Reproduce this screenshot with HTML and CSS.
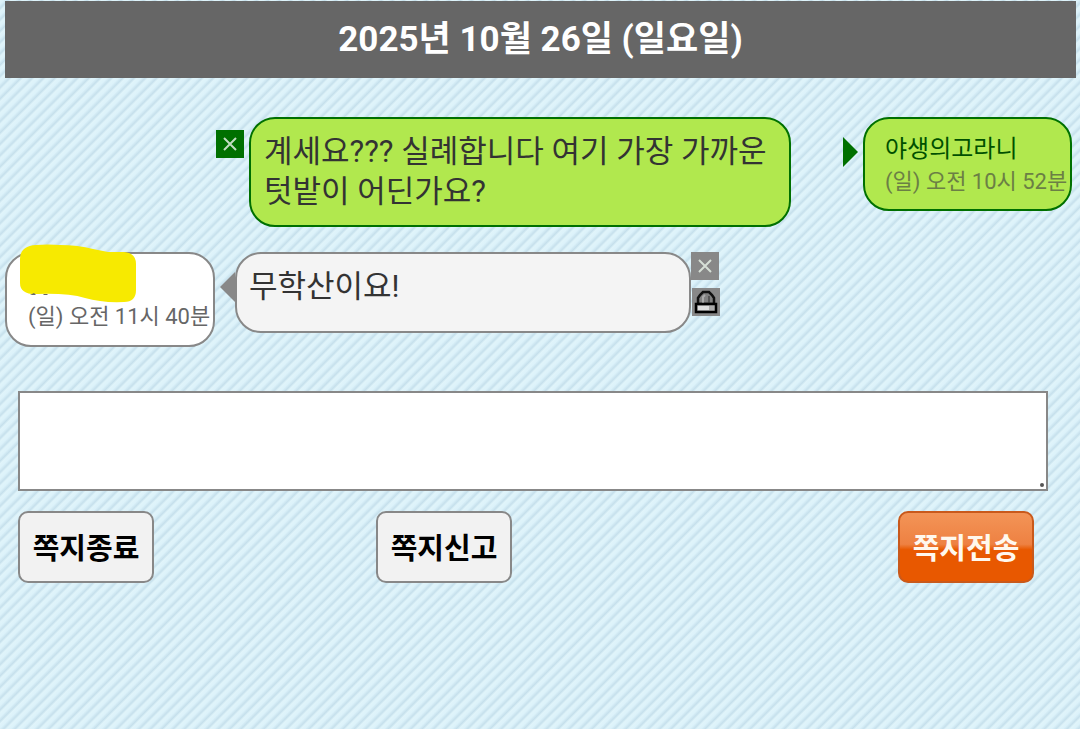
FILE: index.html
```
<!DOCTYPE html>
<html lang="ko">
<head>
<meta charset="utf-8">
<meta name="viewport" content="width=device-width, initial-scale=1">
<title>쪽지</title>
<link rel="stylesheet" href="styles.css">
</head>
<body>
<h1 class="date">2025년 10월 26일 (일요일)</h1>
<main class="thread">
  <article class="row row-sent">
    <button class="tool tool-green" type="button" aria-label="삭제">
      <svg viewBox="0 0 28 28"><path class="cross" d="M8 8l12 12M20 8L8 20"/></svg>
    </button>
    <p class="bubble bubble-sent">계세요??? 실례합니다 여기 가장 가까운 텃밭이 어딘가요?</p>
    <svg class="arrow arrow-sent" viewBox="0 0 15 30"><path d="M0 0L15 15L0 30Z"/></svg>
    <div class="person person-sent">
      <span class="name">야생의고라니</span>
      <time class="time">(일) 오전 10시 52분</time>
    </div>
  </article>
  <article class="row row-received">
    <div class="person person-received">
      <span class="name"></span>
      <time class="time">(일) 오전 11시 40분</time>
      <svg class="marker" viewBox="0 0 116 59"><path d="M16 1Q28 0 40 1Q58 1 73 5L88 8H104Q116 9 116 20V46Q116 58 104 58Q82 59 65 54Q48 49 18 50Q0 51 0 39V15Q0 2 16 1Z"/><path class="remnant" d="M10 51L14 49L16 51ZM23 50H28L27 51H24Z"/></svg>
    </div>
    <svg class="arrow arrow-received" viewBox="0 0 15 30"><path d="M15 0V30L0 15Z"/></svg>
    <p class="bubble bubble-received">무학산이요!</p>
    <div class="tools">
      <button class="tool tool-gray" type="button" aria-label="삭제">
        <svg viewBox="0 0 28 28"><path class="cross" d="M8 8l12 12M20 8L8 20"/></svg>
      </button>
      <button class="tool tool-gray tool-lock" type="button" aria-label="잠금">
        <svg viewBox="0 0 28 28">
          <path d="M6 16V10L8 7L11 4H17L20 7L22 10V16Z" fill="#808080" stroke="#111" stroke-width="2.5"/>
          <path d="M11 15V9L13 7" fill="none" stroke="#aaa" stroke-width="2"/>
          <path d="M17 15V8" fill="none" stroke="#555" stroke-width="2"/>
          <path d="M4 16H24V24H4Z" fill="#aaa" stroke="#000" stroke-width="2.5"/>
          <path d="M6 18H17V22H6Z" fill="#ddd"/>
        </svg>
      </button>
    </div>
  </article>
</main>
<form class="compose">
  <div class="field">
    <textarea class="message" aria-label="쪽지 내용"></textarea>
    <span class="grip"></span>
  </div>
  <div class="actions">
    <button class="btn" type="button">쪽지종료</button>
    <button class="btn" type="button">쪽지신고</button>
    <button class="btn btn-send" type="button">쪽지전송</button>
  </div>
</form>
</body>
</html>
```
FILE: styles.css
```
* { box-sizing: border-box; }
body {
  margin: 0;
  min-height: 100vh;
  padding: 1px 4px 0 5px;
  font-family: Roboto, "Noto Sans CJK KR", sans-serif;
  color: #333;
  background: repeating-linear-gradient(135deg, #e0f4fa 0, #dcf2fa 3px, #c6e0ec 6px, #e0f4fa 8px);
}
.date {
  margin: 0;
  padding: 14px 0;
  font-size: 35px;
  line-height: 49px;
  font-weight: 700;
  text-align: center;
  color: #fff;
  background: #666;
}
.thread { padding-top: 39px; }
.row { display: flex; align-items: flex-start; }
.row-sent { justify-content: flex-end; padding-right: 4px; margin-bottom: 25px; }
.bubble {
  margin: 0;
  padding: 13px;
  border: 2px solid #888;
  border-radius: 26px;
  font-size: 31px;
  line-height: 40px;
}
.bubble-sent {
  width: 542px;
  min-height: 110px;
  margin-left: 5px;
  background: #b1e84e;
  border-color: #007000;
}
.bubble-received { width: 456px; min-height: 81px; padding-left: 12px; background: #f4f4f4; }
.person {
  flex: none;
  position: relative;
  width: 210px;
  padding: 13px 0 12px 21px;
  border: 2px solid #888;
  border-radius: 26px;
  background: #fff;
  white-space: nowrap;
}
.person-sent {
  width: 209px;
  padding: 13px 0 11px 20px;
  margin-left: 5px;
  background: #b1e84e;
  border-color: #007000;
}
.name { display: block; min-height: 34px; font-size: 24px; line-height: 34px; color: #005000; }
.time { display: block; font-size: 22px; line-height: 32px; color: #666; }
.person-sent .time { color: #6b7f45; }
.marker { position: absolute; left: 13px; top: -10px; width: 116px; height: 59px; fill: #f7ea00; }
.remnant { fill: #666; }
.arrow { flex: none; width: 15px; height: 30px; margin-top: 20px; }
.arrow-sent { margin-left: 52px; fill: #007000; }
.arrow-received { margin-left: 5px; fill: #888; }
.tools { display: flex; flex-direction: column; gap: 8px; }
.tool { flex: none; width: 28px; height: 28px; padding: 0; border: 0; }
.tool svg { display: block; width: 28px; height: 28px; }
.tool-green { margin-top: 13px; background: #007000; }
.tool-gray { background: #888; }
.tool-lock { margin-left: 1px; }
.cross { stroke: #e4efe4; stroke-width: 2; opacity: 0.85; }
.compose { padding: 44px 28px 0 13px; }
.field { position: relative; }
.message {
  display: block;
  width: 100%;
  height: 100px;
  border: 2px solid #888;
  background: #fff;
  font: inherit;
  font-size: 31px;
  resize: none;
}
.grip {
  position: absolute;
  right: 4px;
  bottom: 4px;
  width: 4px;
  height: 4px;
  border-radius: 2px;
  background: #555;
}
.actions { display: flex; padding: 20px 14px 0 0; }
.btn {
  width: 136px;
  height: 72px;
  padding: 0 0 2px;
  border: 2px solid #888;
  border-radius: 10px;
  background: #f2f2f2;
  color: #000;
  font-family: inherit;
  font-size: 29px;
  font-weight: 700;
}
.btn + .btn { margin-left: 222px; }
.actions .btn-send {
  margin-left: auto;
  border-color: #c9591b;
  background: linear-gradient(#f39457 0, #ee8142 46%, #e85800 54%, #e85800 100%);
  color: #fff8ee;
}
```
